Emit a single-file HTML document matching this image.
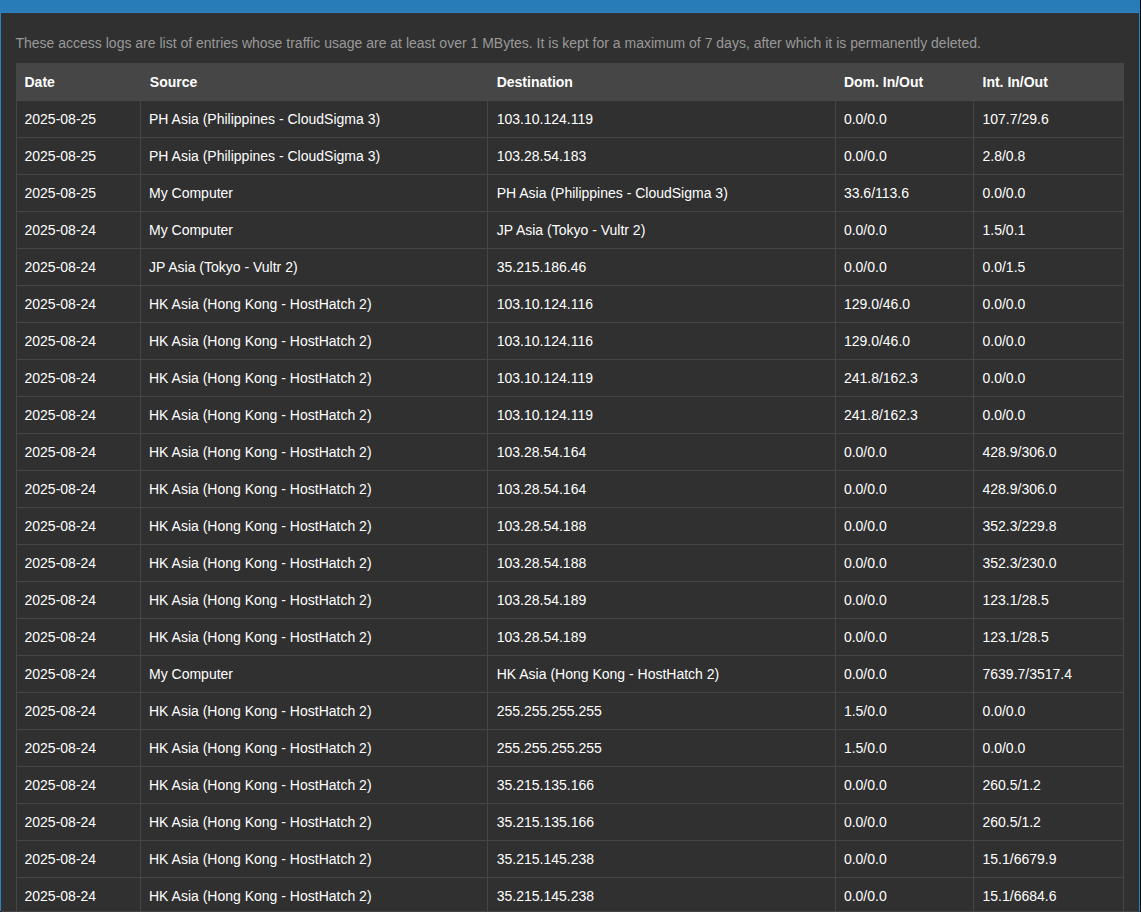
<!DOCTYPE html>
<html><head><meta charset="utf-8"><title>Access Logs</title>
<style>
html,body{margin:0;padding:0;background:#0f0a08;width:1141px;height:912px;overflow:hidden;}
body{font-family:"Liberation Sans",sans-serif;font-size:14px;line-height:20px;color:#fff;}
.panel{position:absolute;left:0;top:0;width:1140px;height:1200px;background:#2a84c4;}
.panel-heading{position:absolute;left:0;top:0;width:1140px;height:12px;background:#287db8;}
.panel-body{position:absolute;left:1px;top:13px;width:1138px;height:1187px;background:#303030;}
.desc{position:absolute;left:14.5px;top:20px;margin:0;color:#999;white-space:nowrap;}
table{position:absolute;left:15px;top:50px;border-collapse:separate;border-spacing:0;table-layout:fixed;width:1108px;}
th,td{box-sizing:border-box;padding:0 8px 0 7.5px;text-align:left;vertical-align:middle;border-left:1px solid #464646;white-space:nowrap;overflow:hidden;}
th{background:#464646;height:38px;font-weight:bold;}
td{height:37px;border-bottom:1px solid #464646;}
th:last-child,td:last-child{border-right:1px solid #464646;}
.bottomline{position:absolute;left:1px;top:911px;width:1139px;height:1px;background:#434343;}
.corner{position:absolute;left:0;top:911px;width:1px;height:1px;background:#1f1712;}
th:nth-child(1),td:nth-child(1){padding-left:7.5px;}
th:nth-child(2),td:nth-child(2){padding-left:8px;}
th:nth-child(3),td:nth-child(3){padding-left:8.7px;}
th:nth-child(4),td:nth-child(4){padding-left:7.9px;}
th:nth-child(5),td:nth-child(5){padding-left:8.5px;}
th:nth-child(2){padding-left:8.8px;}

</style></head>
<body>
<div class="panel">
<div class="panel-heading"></div>
<div class="panel-body">
<p class="desc">These access logs are list of entries whose traffic usage are at least over 1 MBytes. It is kept for a maximum of 7 days, after which it is permanently deleted.</p>
<table>
<colgroup><col style="width:124px"><col style="width:347px"><col style="width:348px"><col style="width:138px"><col style="width:151px"></colgroup>
<thead><tr><th>Date</th><th>Source</th><th>Destination</th><th>Dom. In/Out</th><th>Int. In/Out</th></tr></thead>
<tbody>
<tr><td>2025-08-25</td><td>PH Asia (Philippines - CloudSigma 3)</td><td>103.10.124.119</td><td>0.0/0.0</td><td>107.7/29.6</td></tr>
<tr><td>2025-08-25</td><td>PH Asia (Philippines - CloudSigma 3)</td><td>103.28.54.183</td><td>0.0/0.0</td><td>2.8/0.8</td></tr>
<tr><td>2025-08-25</td><td>My Computer</td><td>PH Asia (Philippines - CloudSigma 3)</td><td>33.6/113.6</td><td>0.0/0.0</td></tr>
<tr><td>2025-08-24</td><td>My Computer</td><td>JP Asia (Tokyo - Vultr 2)</td><td>0.0/0.0</td><td>1.5/0.1</td></tr>
<tr><td>2025-08-24</td><td>JP Asia (Tokyo - Vultr 2)</td><td>35.215.186.46</td><td>0.0/0.0</td><td>0.0/1.5</td></tr>
<tr><td>2025-08-24</td><td>HK Asia (Hong Kong - HostHatch 2)</td><td>103.10.124.116</td><td>129.0/46.0</td><td>0.0/0.0</td></tr>
<tr><td>2025-08-24</td><td>HK Asia (Hong Kong - HostHatch 2)</td><td>103.10.124.116</td><td>129.0/46.0</td><td>0.0/0.0</td></tr>
<tr><td>2025-08-24</td><td>HK Asia (Hong Kong - HostHatch 2)</td><td>103.10.124.119</td><td>241.8/162.3</td><td>0.0/0.0</td></tr>
<tr><td>2025-08-24</td><td>HK Asia (Hong Kong - HostHatch 2)</td><td>103.10.124.119</td><td>241.8/162.3</td><td>0.0/0.0</td></tr>
<tr><td>2025-08-24</td><td>HK Asia (Hong Kong - HostHatch 2)</td><td>103.28.54.164</td><td>0.0/0.0</td><td>428.9/306.0</td></tr>
<tr><td>2025-08-24</td><td>HK Asia (Hong Kong - HostHatch 2)</td><td>103.28.54.164</td><td>0.0/0.0</td><td>428.9/306.0</td></tr>
<tr><td>2025-08-24</td><td>HK Asia (Hong Kong - HostHatch 2)</td><td>103.28.54.188</td><td>0.0/0.0</td><td>352.3/229.8</td></tr>
<tr><td>2025-08-24</td><td>HK Asia (Hong Kong - HostHatch 2)</td><td>103.28.54.188</td><td>0.0/0.0</td><td>352.3/230.0</td></tr>
<tr><td>2025-08-24</td><td>HK Asia (Hong Kong - HostHatch 2)</td><td>103.28.54.189</td><td>0.0/0.0</td><td>123.1/28.5</td></tr>
<tr><td>2025-08-24</td><td>HK Asia (Hong Kong - HostHatch 2)</td><td>103.28.54.189</td><td>0.0/0.0</td><td>123.1/28.5</td></tr>
<tr><td>2025-08-24</td><td>My Computer</td><td>HK Asia (Hong Kong - HostHatch 2)</td><td>0.0/0.0</td><td>7639.7/3517.4</td></tr>
<tr><td>2025-08-24</td><td>HK Asia (Hong Kong - HostHatch 2)</td><td>255.255.255.255</td><td>1.5/0.0</td><td>0.0/0.0</td></tr>
<tr><td>2025-08-24</td><td>HK Asia (Hong Kong - HostHatch 2)</td><td>255.255.255.255</td><td>1.5/0.0</td><td>0.0/0.0</td></tr>
<tr><td>2025-08-24</td><td>HK Asia (Hong Kong - HostHatch 2)</td><td>35.215.135.166</td><td>0.0/0.0</td><td>260.5/1.2</td></tr>
<tr><td>2025-08-24</td><td>HK Asia (Hong Kong - HostHatch 2)</td><td>35.215.135.166</td><td>0.0/0.0</td><td>260.5/1.2</td></tr>
<tr><td>2025-08-24</td><td>HK Asia (Hong Kong - HostHatch 2)</td><td>35.215.145.238</td><td>0.0/0.0</td><td>15.1/6679.9</td></tr>
<tr><td>2025-08-24</td><td>HK Asia (Hong Kong - HostHatch 2)</td><td>35.215.145.238</td><td>0.0/0.0</td><td>15.1/6684.6</td></tr>
</tbody>
</table>
</div>
</div>
<div class="bottomline"></div><div class="corner"></div>
</body></html>
